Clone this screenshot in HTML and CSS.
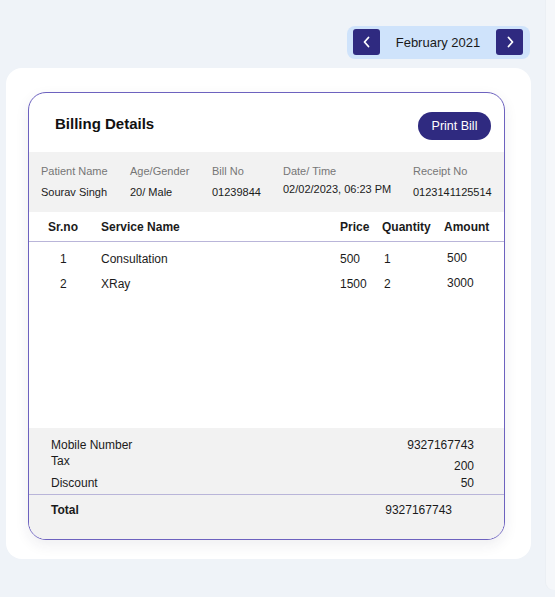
FILE: index.html
```html
<!DOCTYPE html>
<html>
<head>
<meta charset="utf-8">
<link rel="stylesheet" href="styles.css">
</head>
<body>
<div class="page">
  <main class="main">
    <div class="topbar">
      <div class="month-nav">
        <button class="nav-btn" aria-label="Previous">
          <svg width="10" height="12" viewBox="0 0 10 12"><path d="M6.5 1.5 L2.5 6 L6.5 10.5" fill="none" stroke="#fff" stroke-width="1.8" stroke-linecap="round" stroke-linejoin="round"/></svg>
        </button>
        <span class="month-label">February 2021</span>
        <button class="nav-btn" aria-label="Next">
          <svg width="10" height="12" viewBox="0 0 10 12"><path d="M3.5 1.5 L7.5 6 L3.5 10.5" fill="none" stroke="#fff" stroke-width="1.8" stroke-linecap="round" stroke-linejoin="round"/></svg>
        </button>
      </div>
    </div>
    <section class="panel">
      <div class="bill">
        <div class="bill-head">
          <h2 class="bill-title">Billing Details</h2>
          <button class="print-btn">Print Bill</button>
        </div>
        <div class="info">
          <div class="info-col"><span class="info-label">Patient Name</span><span class="info-value">Sourav Singh</span></div>
          <div class="info-col"><span class="info-label">Age/Gender</span><span class="info-value">20/ Male</span></div>
          <div class="info-col"><span class="info-label">Bill No</span><span class="info-value">01239844</span></div>
          <div class="info-col"><span class="info-label">Date/ Time</span><span class="info-value info-value-up">02/02/2023, 06:23 PM</span></div>
          <div class="info-col"><span class="info-label">Receipt No</span><span class="info-value">0123141125514</span></div>
        </div>
        <div class="table">
          <div class="trow thead">
            <span>Sr.no</span><span>Service Name</span><span>Price</span><span>Quantity</span><span>Amount</span>
          </div>
          <div class="trow tdata">
            <span class="c-sr">1</span><span>Consultation</span><span>500</span><span class="c-qty">1</span><span class="c-amt">500</span>
          </div>
          <div class="trow tdata">
            <span class="c-sr">2</span><span>XRay</span><span>1500</span><span class="c-qty">2</span><span class="c-amt">3000</span>
          </div>
        </div>
        <div class="summary">
          <div class="sum-lines">
            <div class="sum-row"><span>Mobile Number</span><span>9327167743</span></div>
            <div class="sum-row sum-tax"><span class="lbl">Tax</span><span class="val">200</span></div>
            <div class="sum-row sum-disc"><span>Discount</span><span>50</span></div>
          </div>
          <div class="sum-total"><span>Total</span><span class="total-val">9327167743</span></div>
        </div>
      </div>
    </section>
  </main>
  <aside class="side-edge"></aside>
</div>
</body>
</html>
```

FILE: styles.css
```css
* { box-sizing: border-box; }
html, body { margin: 0; padding: 0; }
body {
  background: #eff3f8;
  font-family: "Liberation Sans", Arial, sans-serif;
  color: #1b1b1b;
  width: 555px;
  height: 597px;
  overflow: hidden;
}
.page {
  display: flex;
  height: 597px;
}
.main {
  width: 546px;
  display: flex;
  flex-direction: column;
}
.side-edge {
  width: 9px;
  height: 590px;
  background: #f5f7fa;
  border-bottom-left-radius: 8px;
  box-shadow: -1px 0 1px rgba(0,0,0,0.02);
}
.topbar {
  display: flex;
  justify-content: flex-end;
  padding: 26px 16px 0 0;
  height: 68px;
}
.month-nav {
  width: 183px;
  height: 33px;
  background: #cfe3fb;
  border-radius: 8px;
  display: flex;
  align-items: center;
  justify-content: space-between;
  padding: 0 7px 1px 6px;
}
.nav-btn {
  width: 27px;
  height: 26px;
  border: 0;
  border-radius: 3px;
  background: #2f2a80;
  display: flex;
  align-items: center;
  justify-content: center;
  padding: 0;
}
.month-label {
  font-size: 13px;
  color: #1a1a1a;
}
.panel {
  margin-left: 6px;
  width: 525px;
  height: 491px;
  background: #ffffff;
  border-radius: 16px;
  padding: 24px 26px 19px 22px;
}
.bill {
  height: 448px;
  border: 1px solid #6d62bf;
  border-radius: 18px;
  background: #fff;
  box-shadow: 0 5px 14px rgba(40, 40, 80, 0.08);
  display: flex;
  flex-direction: column;
  overflow: hidden;
}
.bill-head {
  height: 59px;
  display: flex;
  align-items: center;
  justify-content: space-between;
  padding: 0 13px 0 26px;
}
.bill-title {
  margin: 1px 0 0 0;
  font-size: 15px;
  font-weight: bold;
  color: #111;
}
.print-btn {
  width: 73px;
  height: 28px;
  border: 0;
  border-radius: 14px;
  background: #2f2a80;
  color: #fff;
  font-family: "Liberation Sans", Arial, sans-serif;
  font-size: 12.5px;
  padding: 0;
  margin-top: 7px;
}
.info {
  height: 60px;
  background: #f2f2f2;
  display: grid;
  grid-template-columns: 89px 82px 71px 130px auto;
  padding: 12px 0 0 12px;
}
.info-col {
  display: flex;
  flex-direction: column;
}
.info-label {
  font-size: 11px;
  color: #767676;
  line-height: 14px;
}
.info-value {
  font-size: 11px;
  color: #1b1b1b;
  line-height: 14px;
  margin-top: 7px;
}
.info-value-up { margin-top: 4px; }
.table {
  flex: 1;
}
.trow {
  display: grid;
  grid-template-columns: 53px 1fr 42px 62px 60px;
  padding-left: 19px;
  font-size: 12px;
}
.thead {
  height: 30px;
  align-items: center;
  font-weight: bold;
  border-bottom: 1px solid #b9b5d9;
}
.tdata {
  height: 25px;
  align-items: center;
}
.table .tdata:nth-child(2) { margin-top: 4px; }
.c-sr { padding-left: 12px; }
.c-qty { padding-left: 2px; }
.c-amt { padding-left: 3px; margin-top: -2px; }
.summary {
  height: 111px;
  background: #f2f2f2;
  display: flex;
  flex-direction: column;
}
.sum-lines {
  padding: 9px 30px 3px 22px;
  border-bottom: 1px solid #b9b5d9;
}
.sum-row {
  display: flex;
  justify-content: space-between;
  font-size: 12px;
  line-height: 16px;
}
.sum-tax {
  height: 21px;
}
.sum-tax .lbl { align-self: flex-start; }
.sum-tax .val { align-self: flex-end; }
.sum-disc { margin-top: 1px; }
.sum-total {
  display: flex;
  justify-content: space-between;
  font-size: 12px;
  line-height: 16px;
  padding: 7px 52px 0 22px;
}
.sum-total span:first-child { font-weight: bold; }
```
